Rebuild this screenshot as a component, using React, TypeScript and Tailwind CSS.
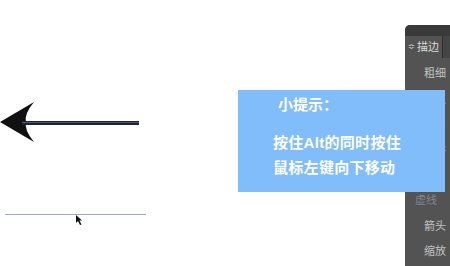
export default function App() {
  return (
    <div className="relative flex h-[266px] w-[450px] overflow-hidden bg-white font-['Liberation_Sans','Noto_Sans_CJK_SC',sans-serif]">
      <div className="relative flex-1">
        <svg width="405" height="266" className="block">
          <path d="M0 122 L34 102 Q24 114 26 122 Q24 130 34 142 Z" fill="#111" />
          <rect x="22" y="121" width="117" height="4" fill="#1f2434" />
          <rect x="22" y="122" width="117" height="1" fill="#4a5578" />
          <line x1="5" y1="214.5" x2="146" y2="214.5" stroke="#9aa8cc" strokeWidth="1.2" />
          <path d="M76 215 L76 223 L78 221 L80 225 L81.5 224.5 L79.5 220.5 L82 220.5 Z" fill="#111" />
        </svg>
      </div>
      <aside className="mt-[25px] flex w-[45px] flex-col overflow-hidden rounded-tl-[5px] bg-[#535353]">
        <div className="h-[11px] bg-[#3a3a3a]" />
        <div className="flex h-[22px] bg-[#454545]">
          <div className="flex w-[37px] items-center gap-[2px] bg-[#535353] pl-[3px] text-[11px] text-[#dcdcdc]">
            <span className="text-[8px]">≎</span>
            <span>描边</span>
          </div>
          <div className="w-px bg-[#2e2e2e]" />
        </div>
        <div className="flex flex-1 flex-col items-end pr-[4px] pt-[7px] text-[11px] text-[#c4c4c4]">
          <span className="leading-[16px]">粗细</span>
          <span className="mt-[10px] leading-[16px]">端点</span>
          <span className="mt-[10px] leading-[16px]">边角</span>
          <span className="mt-[10px] leading-[16px]">对齐</span>
          <span className="mt-[33px] self-start pl-[10px] leading-[16px] text-[#7d8593]">虚线</span>
          <span className="mt-[10px] leading-[16px]">箭头</span>
          <span className="mt-[9px] leading-[16px]">缩放</span>
        </div>
      </aside>
      <div className="absolute left-[238px] top-[90px] flex h-[102px] w-[207px] flex-col bg-[#80bdfa] pl-[35px] pt-[2px] text-[15px] font-bold text-white">
        <span className="pl-[5px] leading-[25px]">小提示：</span>
        <span className="mt-[13px] leading-[25px] tracking-[0.3px]">按住Alt的同时按住</span>
        <span className="leading-[25px] tracking-[0.3px]">鼠标左键向下移动</span>
      </div>
    </div>
  );
}
